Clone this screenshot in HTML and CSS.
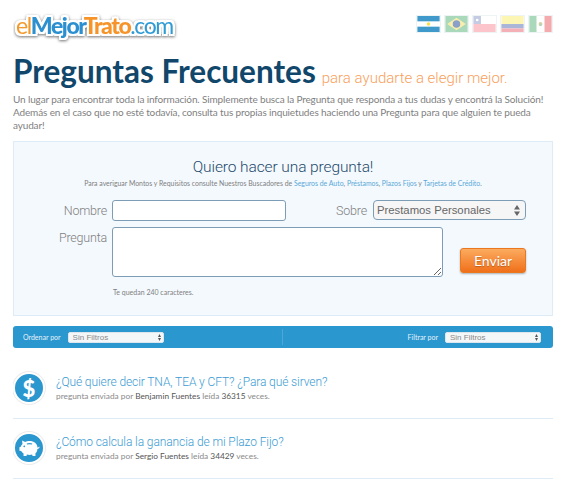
FILE: index.html
```html
<!DOCTYPE html>
<html lang="es">
<head>
    <meta charset="UTF-8">
    <meta name="viewport" content="width=device-width, initial-scale=1.0">
    <title>Preguntas Frecuentes</title>
    <link rel="stylesheet" href="styles.css">
</head>
<body>
    <div id="page">
        <div class="top-bar">
            <div class="logo"><span class="logo-light-orange">el</span><span class="logo-blue">Mejor</span><span class="logo-orange">Trato</span><span class="logo-light-blue">.com</span></div>
            <div class="flags">
                <svg class="flag" viewBox="0 0 25 18"><rect width="25" height="18" fill="#fff"/><rect width="25" height="6" fill="#3f9acb"/><rect y="12" width="25" height="6" fill="#3f9acb"/><circle cx="12.5" cy="9" r="2" fill="#f7e04b"/></svg>
                <svg class="flag" viewBox="0 0 25 18"><rect width="25" height="18" fill="#a9d8bb"/><polygon points="12.5,2 23,9 12.5,16 2,9" fill="#f8eeae"/><circle cx="12.5" cy="9" r="4.2" fill="#8b9fc9"/></svg>
                <svg class="flag" viewBox="0 0 25 18"><rect width="25" height="18" fill="#fff"/><rect y="9" width="25" height="9" fill="#fcc4cb"/><rect width="8.500" height="9" fill="#c4cbe3"/><circle cx="4.300" cy="4.500" r="1.500" fill="#fff"/></svg>
                <svg class="flag" viewBox="0 0 25 18"><rect width="25" height="9" fill="#fcf6b4"/><rect y="9" width="25" height="5" fill="#a9b6d8"/><rect y="14" width="25" height="4" fill="#f3b0b7"/></svg>
                <svg class="flag" viewBox="0 0 25 18"><rect width="25" height="18" fill="#fff"/><rect width="8" height="18" fill="#a9d8bb"/><rect x="17" width="8" height="18" fill="#f3abb0"/><circle cx="12.500" cy="9" r="2.200" fill="#d9cfa6"/><circle cx="12.500" cy="10" r="1.300" fill="#a9d8bb"/></svg>
            </div>
        </div>

        <div class="page-title">
            <h1>Preguntas Frecuentes</h1>
            <span class="tagline">para ayudarte a elegir mejor.</span>
        </div>
        <p class="intro">Un lugar para encontrar toda la información. Simplemente busca la Pregunta que responda a tus dudas y encontrá la Solución!<br>Además en el caso que no esté todavía, consulta tus propias inquietudes haciendo una Pregunta para que alguien te pueda<br>ayudar!</p>

        <form class="ask-box">
            <h2>Quiero hacer una pregunta!</h2>
            <p class="ask-help">Para averiguar Montos y Requisitos consulte Nuestros Buscadores de <a href="#">Seguros de Auto</a>, <a href="#">Préstamos</a>, <a href="#">Plazos Fijos</a> y <a href="#">Tarjetas de Crédito</a>.</p>
            <div class="form-row">
                <label class="field-label">Nombre</label>
                <input type="text" class="name-input">
                <label class="field-label about-label">Sobre</label>
                <select class="about-select"><option>Prestamos Personales</option></select>
            </div>
            <div class="form-row question-row">
                <label class="field-label">Pregunta</label>
                <textarea class="question-input"></textarea>
                <button type="button" class="send-button">Enviar</button>
            </div>
            <p class="char-count">Te quedan 240 caracteres.</p>
        </form>

        <div class="filter-bar">
            <div class="filter-group">
                <label>Ordenar por</label>
                <select class="filter-select"><option>Sin Filtros</option></select>
            </div>
            <div class="filter-group filter-right">
                <label>Filtrar por</label>
                <select class="filter-select"><option>Sin Filtros</option></select>
            </div>
        </div>

        <div class="question">
            <div class="q-icon"><span class="dollar">$</span></div>
            <div class="q-text">
                <a href="#" class="q-title">¿Qué quiere decir TNA, TEA y CFT? ¿Para qué sirven?</a>
                <div class="q-meta">pregunta enviada por <b>Benjamin Fuentes</b> leída <b>36315</b> veces.</div>
            </div>
        </div>
        <div class="question">
            <div class="q-icon">
                <svg class="piggy" viewBox="0 0 24 20">
                    <path d="M3 9 C3 5 7 2 12 2 C14 2 15.500 2.400 17 3.200 L20.500 1.500 L20 5.500 C21 6.500 21.600 7.500 22 8.500 L23.500 9 L23.500 13 L21.500 13.500 C20.800 14.800 19.800 15.700 18.800 16.300 L18.800 19 L15.500 19 L15 17.500 C13 18 11 18 9 17.500 L8.500 19 L5.200 19 L5.200 16 C3.800 14.800 3 13 3 11 C1.500 11 .5 10 .5 8.500 L1.500 8.500 C1.500 9.200 2.200 9.700 3 9 Z" fill="#fff"/>
                    <path d="M9 5.500 C11 4.800 13 4.800 15 5.500" fill="none" stroke="#2b97cf" stroke-width="1.200"/>
                    <circle cx="18" cy="8" r="1" fill="#2b97cf"/>
                </svg>
            </div>
            <div class="q-text">
                <a href="#" class="q-title">¿Cómo calcula la ganancia de mi Plazo Fijo?</a>
                <div class="q-meta">pregunta enviada por <b>Sergio Fuentes</b> leída <b>34429</b> veces.</div>
            </div>
        </div>
    </div>
</body>
</html>
```

FILE: styles.css
```css
body {
    font-family: 'Lato', 'Noto Sans', sans-serif;
    background-color: #ffffff;
    color: #7f7f7f;
    margin: 0;
    padding: 0;
}

#page {
    width: 540px;
    margin-left: 13px;
    overflow: hidden;
}

a {
    color: #5ba8d8;
    text-decoration: none;
}

.top-bar {
    display: flex;
    justify-content: space-between;
    height: 52px;
}

.logo {
    font-size: 23px;
    letter-spacing: -1.4px;
    margin: 9px 0 0 3px;
    line-height: 32px;
    height: 32px;
    filter: drop-shadow(2px 0 0 #fff) drop-shadow(-2px 0 0 #fff) drop-shadow(0 2px 0 #fff) drop-shadow(0 -2px 0 #fff) drop-shadow(0 1px 1.500px rgba(0, 0, 0, 0.55));
}

.logo-light-orange { color: #f39a2e; }
.logo-blue { color: #2b8fd0; font-weight: 900; }
.logo-orange { color: #f6942a; font-weight: 900; }
.logo-light-blue { color: #2f9bd5; }

.flags {
    display: flex;
    gap: 3px;
    margin: 15px 0 0 0;
}

.flag {
    width: 25px;
    height: 18px;
    display: block;
    box-sizing: border-box;
    border: 1px solid #eef3f6;
}

.page-title {
    display: flex;
    align-items: baseline;
    gap: 6px;
    height: 38px;
    white-space: nowrap;
}

h1 {
    font-size: 31.500px;
    font-weight: 700;
    color: #10476b;
    margin: 0;
    line-height: 38px;
}

.tagline {
    font-family: 'Roboto', sans-serif;
    font-size: 15px;
    font-weight: 300;
    color: #f9a05c;
}

.intro {
    font-size: 10px;
    line-height: 13px;
    letter-spacing: -0.14px;
    white-space: nowrap;
    margin: 3px 0 0 0;
    height: 39px;
}

.ask-box {
    box-sizing: border-box;
    height: 175px;
    margin: 9px 0 10px 0;
    background-color: #f4f9fe;
    border: 1px solid #deecf8;
    padding: 14px 26px 0 0;
}

h2 {
    font-family: 'Roboto', sans-serif;
    font-size: 15.500px;
    font-weight: 300;
    letter-spacing: -0.1px;
    color: #1f4a6b;
    text-align: center;
    margin: 0 0 0 26px;
    line-height: 22px;
}

.ask-help {
    font-size: 6.900px;
    line-height: 10px;
    text-align: center;
    margin: 0 0 0 26px;
}

.form-row {
    display: flex;
    align-items: flex-start;
    margin-top: 12px;
}

.question-row {
    margin-top: 6px;
}

.field-label {
    font-family: 'Roboto', sans-serif;
    font-size: 12.500px;
    font-weight: 300;
    letter-spacing: -0.2px;
    width: 93px;
    text-align: right;
    margin-right: 5px;
    line-height: 21px;
}

.about-label {
    width: auto;
    margin-left: 50px;
    margin-right: 5px;
}

.name-input {
    box-sizing: border-box;
    width: 174px;
    height: 21px;
    border: 1px solid #7d9db6;
    border-radius: 3px;
    background-color: #fff;
}

.about-select {
    appearance: none;
    box-sizing: border-box;
    width: 153px;
    height: 20px;
    margin-left: auto;
    padding: 0 0 0 3px;
    border: 1px solid #7d9db6;
    border-radius: 4px;
    font-family: 'Liberation Sans', sans-serif;
    font-size: 11.300px;
    color: #666;
    background: #f6f6f6 url("data:image/svg+xml,%3Csvg xmlns='http://www.w3.org/2000/svg' width='6' height='11'%3E%3Cpath d='M3 0L6 4.500H0zM3 11L0 6.500H6z' fill='%23666'/%3E%3C/svg%3E") no-repeat right 5px center;
}

.question-input {
    box-sizing: border-box;
    width: 331px;
    height: 50px;
    border: 1px solid #7d9db6;
    border-radius: 3px;
    background-color: #fff;
    margin: 0;
}

.send-button {
    box-sizing: border-box;
    width: 66px;
    height: 25px;
    margin: 21px 0 0 auto;
    border: 1px solid #e9781f;
    border-radius: 3px;
    background: linear-gradient(#fbab5f, #f0701a);
    box-shadow: 0 1px 2px rgba(0, 0, 0, 0.3);
    color: #fff;
    font-family: 'Lato', sans-serif;
    font-size: 14px;
    text-shadow: 0 1px 1px rgba(0, 0, 0, 0.25);
}

.char-count {
    font-size: 7px;
    line-height: 10px;
    margin: 10px 0 0 99px;
}

.filter-bar {
    display: flex;
    align-items: center;
    height: 22px;
    background-color: #2b97cf;
    border-radius: 3px;
    margin-bottom: 24px;
}

.filter-group {
    box-sizing: border-box;
    flex: 1;
    display: flex;
    align-items: center;
    gap: 7px;
    padding-left: 10px;
    height: 16px;
}

.filter-right {
    justify-content: flex-end;
    border-left: 1px solid #4aa7d8;
    padding: 0 12px 0 0;
}

.filter-group label {
    font-size: 7px;
    color: #e4f2fa;
}

.filter-select {
    appearance: none;
    box-sizing: border-box;
    width: 96px;
    height: 11px;
    padding: 0 0 0 4px;
    border: 1px solid #dce6ec;
    border-radius: 2px;
    font-family: 'Liberation Sans', sans-serif;
    font-size: 8px;
    line-height: 9px;
    color: #8a8a8a;
    background: #f4f7f8 url("data:image/svg+xml,%3Csvg xmlns='http://www.w3.org/2000/svg' width='3' height='7'%3E%3Cpath d='M1.500 0L3 3H0zM1.500 7L0 4H3z' fill='%23555'/%3E%3C/svg%3E") no-repeat right 2px center;
}

.question {
    display: flex;
    gap: 11px;
    height: 46px;
    margin-bottom: 13px;
    border-bottom: 1px solid #deecf8;
}

.q-icon {
    box-sizing: border-box;
    width: 32px;
    height: 32px;
    border-radius: 50%;
    background-color: #2b97cf;
    border: 2px solid #fff;
    box-shadow: 0 0 0 1px #ececec;
    display: flex;
    align-items: center;
    justify-content: center;
}

.dollar {
    font-size: 22px;
    font-weight: 900;
    color: #fff;
}

.piggy {
    width: 21px;
    height: 18px;
    transform: scaleX(-1);
}

.q-text {
    padding-top: 2px;
}

.q-title {
    font-family: 'Roboto', sans-serif;
    font-size: 12px;
    font-weight: 300;
    letter-spacing: -0.1px;
    line-height: 17px;
    display: block;
    color: #3c9bd2;
}

.q-meta {
    font-size: 8.300px;
    line-height: 11px;
    color: #8a8a8a;
}

.q-meta b {
    font-weight: 400;
    color: #555;
}
```
